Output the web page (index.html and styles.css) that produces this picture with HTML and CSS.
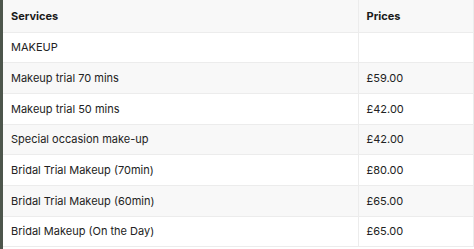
FILE: index.html
```html
<!DOCTYPE html>
<html>
<head>
<meta charset="utf-8">
<link rel="stylesheet" href="styles.css">
</head>
<body>
<div class="page">
  <div class="strip"></div>
  <table class="prices">
    <thead>
      <tr><th class="svc">Services</th><th class="price">Prices</th></tr>
    </thead>
    <tbody>
      <tr><td>MAKEUP</td><td></td></tr>
      <tr><td>Makeup trial 70 mins</td><td>£59.00</td></tr>
      <tr><td>Makeup trial 50 mins</td><td>£42.00</td></tr>
      <tr><td>Special occasion make-up</td><td>£42.00</td></tr>
      <tr><td>Bridal Trial Makeup (70min)</td><td>£80.00</td></tr>
      <tr><td>Bridal Trial Makeup (60min)</td><td>£65.00</td></tr>
      <tr><td>Bridal Makeup (On the Day)</td><td>£65.00</td></tr>
    </tbody>
  </table>
</div>
</body>
</html>
```
FILE: styles.css
```css
html, body {
  margin: 0;
  padding: 0;
  background: #ffffff;
}
.page {
  display: flex;
  align-items: flex-start;
  width: 474px;
  height: 249px;
  overflow: hidden;
}
.strip {
  width: 3px;
  height: 249px;
  flex: none;
  background: #4d564c;
}
.prices {
  flex: 1;
  border-collapse: collapse;
  font-family: "Inter", "Open Sans", sans-serif;
  font-size: 11px;
  color: #222222;
  table-layout: fixed;
  border-right: 1px solid #ececec;
}
.prices th, .prices td {
  text-align: left;
  padding: 0 8px;
  box-sizing: border-box;
  border-bottom: 1px solid #ececec;
}
.prices th {
  height: 32px;
  font-weight: 700;
  color: #1a1a1a;
  background: #f8f8f8;
}
.prices td {
  height: 30.7px;
}
.prices th:first-child, .prices td:first-child {
  width: 355px;
}
.prices th + th, .prices td + td {
  border-left: 1px solid #ececec;
}
.prices tbody tr:nth-child(even) {
  background: #f8f8f8;
}
```
